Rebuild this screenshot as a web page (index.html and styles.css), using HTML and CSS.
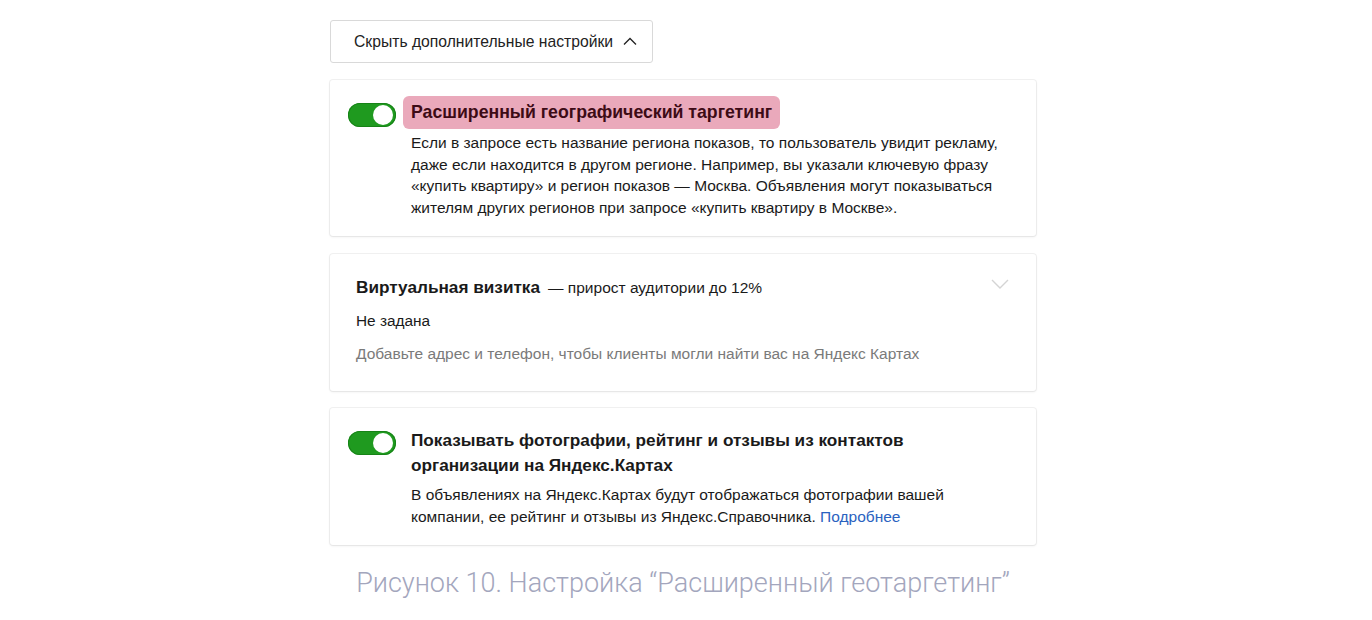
FILE: index.html
```html
<!DOCTYPE html>
<html lang="ru">
<head>
<meta charset="utf-8">
<link rel="stylesheet" href="styles.css">
</head>
<body>
<div class="page">
  <div class="column">
    <button class="toggle-btn">Скрыть дополнительные настройки
      <svg class="chev-up" width="14" height="8" viewBox="0 0 14 8"><path d="M1 7.5 L7 1.5 L13 7.5" fill="none" stroke="#222" stroke-width="1.3"/></svg>
    </button>

    <div class="card card-geo">
      <div class="row">
        <span class="switch"><span class="knob"></span></span>
        <div class="body">
          <div class="hl-title">Расширенный географический таргетинг</div>
          <p class="desc">Если в запросе есть название региона показов, то пользователь увидит рекламу, даже если находится в другом регионе. Например, вы указали ключевую фразу «купить квартиру» и регион показов — Москва. Объявления могут показываться жителям других регионов при запросе «купить квартиру в Москве».</p>
        </div>
      </div>
    </div>

    <div class="card card-vcard">
      <div class="vc-head">
        <div class="vc-title"><b>Виртуальная визитка</b><span class="vc-sub">— прирост аудитории до 12%</span></div>
        <svg class="chev-down" width="18" height="10" viewBox="0 0 18 10"><path d="M1 1 L9 9 L17 1" fill="none" stroke="#d4d4d4" stroke-width="1.4"/></svg>
      </div>
      <div class="vc-state">Не задана</div>
      <div class="vc-hint">Добавьте адрес и телефон, чтобы клиенты могли найти вас на Яндекс Картах</div>
    </div>

    <div class="card card-photos">
      <div class="row">
        <span class="switch sw2"><span class="knob"></span></span>
        <div class="body">
          <div class="title2">Показывать фотографии, рейтинг и отзывы из контактов организации на Яндекс.Картах</div>
          <p class="desc desc2">В объявлениях на Яндекс.Картах будут отображаться фотографии вашей компании, ее рейтинг и отзывы из Яндекс.Справочника. <a class="link" href="#">Подробнее</a></p>
        </div>
      </div>
    </div>

    <div class="caption">Рисунок 10. Настройка “Расширенный геотаргетинг”</div>
  </div>
</div>
</body>
</html>
```

FILE: styles.css
```css
html, body {
  margin: 0;
  padding: 0;
  background: #ffffff;
}
body {
  font-family: "Liberation Sans", Arial, sans-serif;
  color: #1a1a1a;
}
.page {
  width: 1372px;
  height: 620px;
  overflow: hidden;
}
.column {
  margin-left: 330px;
  padding-top: 20px;
  width: 706px;
  display: flex;
  flex-direction: column;
}
.toggle-btn {
  align-self: flex-start;
  width: 323px;
  height: 43px;
  box-sizing: border-box;
  background: #fff;
  border: 1px solid #d9d9d9;
  border-radius: 3px;
  font-family: inherit;
  font-size: 15.7px;
  color: #222;
  padding: 0 0 0 23px;
  display: flex;
  align-items: center;
  gap: 10px;
  cursor: pointer;
}
.chev-up { margin-top: -2px; }
.card {
  background: #fff;
  border-radius: 3px;
  box-shadow: 0 0 0 1px rgba(0,0,0,0.05), 0 1px 3px rgba(0,0,0,0.07);
  box-sizing: border-box;
}
.card-geo {
  margin-top: 17px;
  height: 156px;
  padding: 16px 18px 0 18px;
}
.row {
  display: flex;
  align-items: flex-start;
}
.switch {
  flex: none;
  width: 48px;
  height: 24px;
  border-radius: 12px;
  background: #1f9a1f;
  box-shadow: inset 0 0 0 1px #178317;
  position: relative;
  margin-top: 7px;
}
.knob {
  position: absolute;
  right: 3px;
  top: 2px;
  width: 20px;
  height: 20px;
  border-radius: 50%;
  background: #fff;
}
.body {
  margin-left: 7px;
}
.hl-title {
  display: inline-block;
  background: #eaa9bb;
  border-radius: 6px;
  padding: 0 8px;
  height: 33px;
  line-height: 33px;
  font-weight: bold;
  font-size: 17.7px;
  color: #3d0b16;
}
.desc {
  margin: 3px 0 0 8px;
  font-size: 15.5px;
  line-height: 21.5px;
  color: #1a1a1a;
  width: 610px;
}
.card-vcard {
  margin-top: 18px;
  height: 137px;
  padding: 21px 26px 0 26px;
}
.vc-head {
  display: flex;
  justify-content: space-between;
  align-items: flex-start;
}
.vc-title {
  font-size: 17.2px;
  line-height: 24px;
}
.vc-title b { font-weight: bold; }
.vc-sub {
  font-size: 15.5px;
  margin-left: 8px;
}
.chev-down {
  margin-top: 4px;
  margin-right: 1px;
}
.vc-state {
  margin-top: 10px;
  font-size: 15.4px;
  line-height: 22px;
}
.vc-hint {
  margin-top: 11px;
  font-size: 15.5px;
  line-height: 22px;
  color: #7a7a7a;
}
.card-photos {
  margin-top: 17px;
  height: 137px;
  padding: 20px 18px 0 18px;
}
.sw2 { margin-top: 3px; }
.title2 {
  margin-left: 8px;
  font-weight: bold;
  font-size: 17.2px;
  line-height: 25px;
  width: 540px;
  color: #1a1a1a;
}
.desc2 {
  margin-top: 6px;
  width: 555px;
}
.link {
  display: inline-block;
  color: #2a62c0;
  text-decoration: none;
}
.caption {
  margin-top: 22px;
  text-align: center;
  font-family: Roboto, sans-serif;
  font-weight: 300;
  font-size: 27px;
  line-height: 32px;
  color: #a3a6bd;
}
```
